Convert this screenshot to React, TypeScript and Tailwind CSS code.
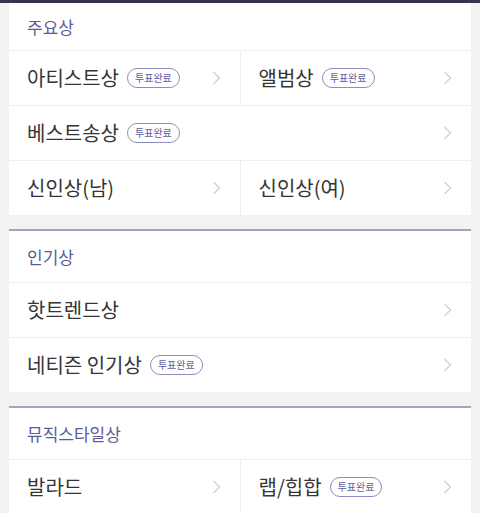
import React from "react";

type Item = { label: string; done?: boolean; full?: boolean };

const sections: { title: string; items: Item[] }[] = [
  {
    title: "주요상",
    items: [
      { label: "아티스트상", done: true },
      { label: "앨범상", done: true },
      { label: "베스트송상", done: true, full: true },
      { label: "신인상(남)" },
      { label: "신인상(여)" },
    ],
  },
  {
    title: "인기상",
    items: [
      { label: "핫트렌드상", full: true },
      { label: "네티즌 인기상", done: true, full: true },
    ],
  },
  {
    title: "뮤직스타일상",
    items: [{ label: "발라드" }, { label: "랩/힙합", done: true }],
  },
];

function Chevron() {
  return (
    <svg width="9" height="14" viewBox="0 0 9 14" fill="none" className="shrink-0">
      <path d="M1.5 1L7.5 7L1.5 13" stroke="#cfcfcf" strokeWidth="1.2" />
    </svg>
  );
}

function Badge() {
  return (
    <span className="ml-[8px] inline-flex h-[20px] items-center rounded-full border border-[#8e8dbd] px-[7px] text-[10px] leading-none text-[#5f5e9e]">
      투표완료
    </span>
  );
}

function Row({ item }: { item: Item }) {
  return (
    <div className="flex h-[54px] items-center justify-between pl-[18px] pr-[19px]">
      <div className="flex items-center">
        <span className="text-[20px] text-[#353535]">{item.label}</span>
        {item.done && <Badge />}
      </div>
      <Chevron />
    </div>
  );
}

export default function App() {
  return (
    <div
      className="min-h-[513px] w-[480px] overflow-hidden bg-[#f2f2f2]"
      style={{ fontFamily: '"Noto Sans CJK KR", "Noto Sans", sans-serif' }}
    >
      <div className="h-[3px] bg-[#35344f]" />
      <div className="mx-[9px] flex flex-col gap-[14px]">
        {sections.map((s, i) => (
          <section
            key={s.title}
            className={`bg-white ${i > 0 ? "border-t-[2px] border-[#a3a2c2]" : ""}`}
          >
            <div
              className={`flex items-center pl-[18px] text-[17px] text-[#5c5b9a] ${
                i === 0 ? "h-[47px]" : "h-[51px]"
              }`}
            >
              {s.title}
            </div>
            <div className="grid grid-cols-2 gap-px bg-[#efefef] pt-px">
              {s.items.map((it) => (
                <div key={it.label} className={`bg-white ${it.full ? "col-span-2" : ""}`}>
                  <Row item={it} />
                </div>
              ))}
            </div>
          </section>
        ))}
      </div>
    </div>
  );
}
